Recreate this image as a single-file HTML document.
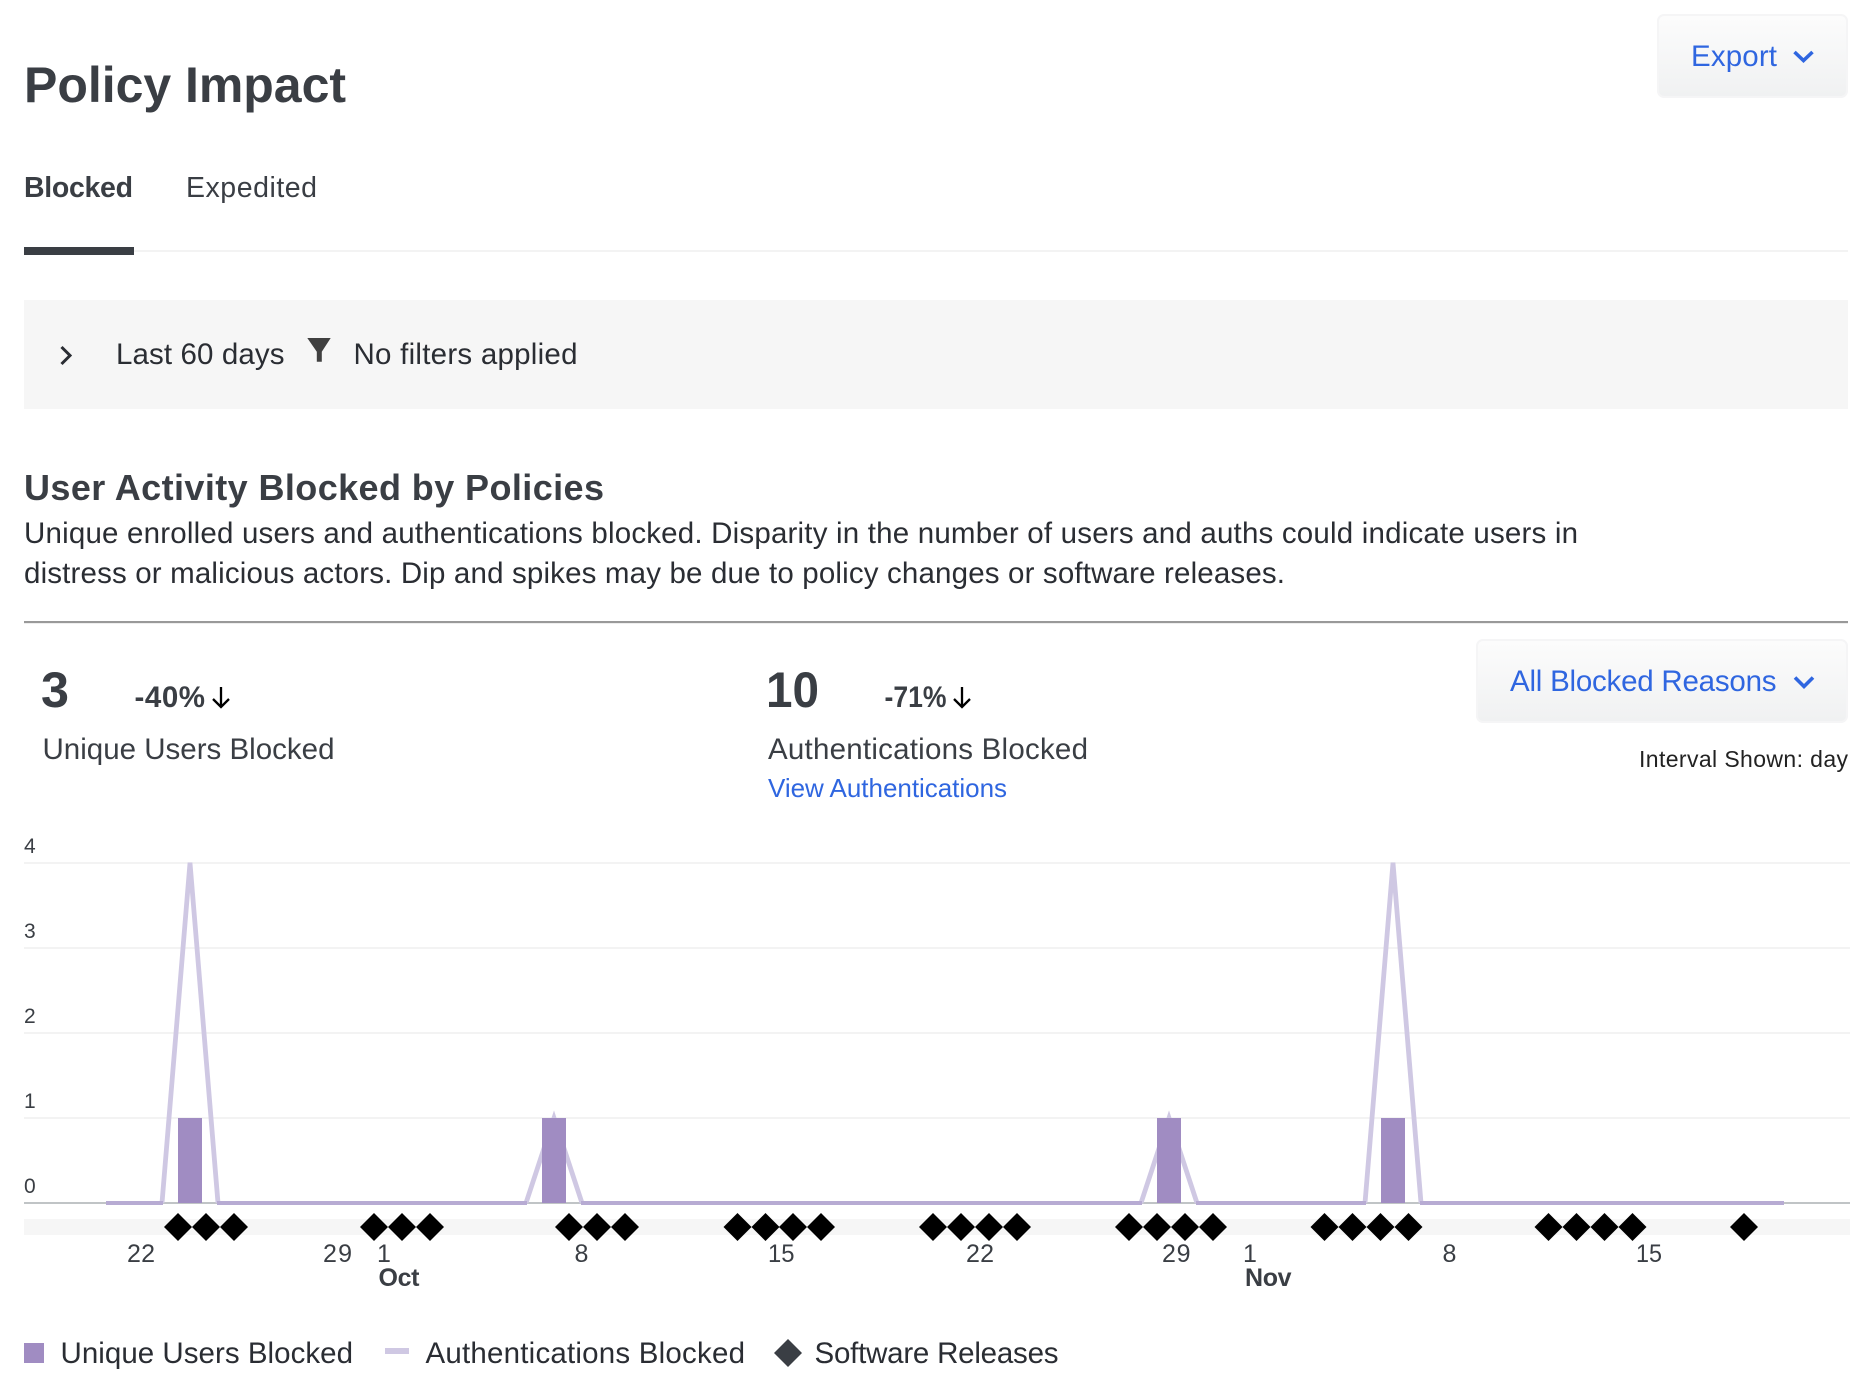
<!DOCTYPE html>
<html lang="en"><head><meta charset="utf-8"><title>Policy Impact</title>
<style>
html,body{margin:0;padding:0;background:#fff;width:1866px;height:1390px;overflow:hidden}
.box{position:absolute;box-sizing:border-box}
.btn{background:linear-gradient(#fcfcfc,#f0f1f2);border:2px solid #f5f5f6;border-radius:7px}
svg{position:absolute;left:0;top:0}
text{font-family:"Liberation Sans",sans-serif;font-size:29.500px;fill:#2a2d33}
.b{font-weight:700;fill:#3a3e44}
.blue{fill:#2f66e0}
.tk{font-size:25px;fill:#3a3e44}
.y{font-size:21px;fill:#3a3e44}
</style></head><body>
<div class="box btn" style="left:1657px;top:14px;width:191px;height:84px"></div>
<div class="box" style="left:24px;top:250px;width:1824px;height:2px;background:#f3f3f3"></div>
<div class="box" style="left:24px;top:247px;width:110px;height:8px;background:#3a3e44"></div>
<div class="box" style="left:24px;top:300px;width:1824px;height:109px;background:#f6f6f6"></div>
<div class="box" style="left:24px;top:621px;width:1824px;height:2px;background:#999"></div>
<div class="box" style="left:24px;top:623px;width:1824px;height:1px;background:#eee"></div>
<div class="box btn" style="left:1476px;top:639px;width:372px;height:84px"></div>
<svg width="1866" height="1390" viewBox="0 0 1866 1390" xmlns="http://www.w3.org/2000/svg">
<defs><clipPath id="c"><rect x="0" y="862.500" width="1866" height="350"/></clipPath></defs>
<text class="b" x="24" y="102" style="font-size:50px" textLength="322">Policy Impact</text>
<text class="b" x="24" y="197" style="font-size:28.500px" textLength="109">Blocked</text>
<text x="186" y="197" style="font-size:28.500px;fill:#3a3e44" textLength="131">Expedited</text>
<text class="blue" x="1691" y="66" textLength="86">Export</text>
<path d="M1794.500 52L1803.500 60.500L1812.500 52" fill="none" stroke="#2f66e0" stroke-width="3.600"/>
<path d="M61.500 347L70 355.500L61.500 364" fill="none" stroke="#2a2d33" stroke-width="3"/>
<text x="116" y="364" textLength="168.500">Last 60 days</text>
<polygon points="307.300,338 330.700,338 321.800,351.700 321.800,361.700 316.800,361.700 316.800,351.700" fill="#404040"/>
<text x="353.500" y="364" textLength="224">No filters applied</text>
<text class="b" x="24" y="500" style="font-size:36px" textLength="580">User Activity Blocked by Policies</text>
<text x="24" y="543" textLength="1554">Unique enrolled users and authentications blocked. Disparity in the number of users and auths could indicate users in</text>
<text x="24" y="583" textLength="1261">distress or malicious actors. Dip and spikes may be due to policy changes or software releases.</text>
<text class="b" x="41" y="707" style="font-size:50px" textLength="28" lengthAdjust="spacingAndGlyphs">3</text>
<text class="b" x="134.500" y="707" textLength="70.500">-40%</text>
<path d="M221 687V707M213 699L221 707L229 699" fill="none" stroke="#000" stroke-width="2.300"/>
<text x="42.500" y="759" style="fill:#3a3e44" textLength="292">Unique Users Blocked</text>
<text class="b" x="766" y="707" style="font-size:50px" textLength="53" lengthAdjust="spacingAndGlyphs">10</text>
<text class="b" x="884.500" y="707" textLength="62" lengthAdjust="spacingAndGlyphs">-71%</text>
<path d="M962 687V707M954 699L962 707L970 699" fill="none" stroke="#000" stroke-width="2.300"/>
<text x="768" y="759" style="fill:#3a3e44" textLength="320">Authentications Blocked</text>
<text class="blue" x="768" y="797" style="font-size:26px" textLength="239">View Authentications</text>
<text class="blue" x="1510" y="691" textLength="266.500">All Blocked Reasons</text>
<path d="M1795 677.500L1804 686.500L1813 677.500" fill="none" stroke="#2f66e0" stroke-width="3.600"/>
<text x="1639" y="767" style="font-size:23px;fill:#222" textLength="209">Interval Shown: day</text>
<g fill="#f3f3f3">
<rect x="24" y="862" width="1826" height="2"/><rect x="24" y="947" width="1826" height="2"/>
<rect x="24" y="1032" width="1826" height="2"/><rect x="24" y="1117" width="1826" height="2"/>
</g>
<rect x="24" y="1202" width="1826" height="2" fill="#c0c4c6"/>
<text class="y" x="24" y="853">4</text><text class="y" x="24" y="938">3</text>
<text class="y" x="24" y="1023">2</text><text class="y" x="24" y="1108">1</text><text class="y" x="24" y="1193">0</text>
<g clip-path="url(#c)" fill="none" stroke-miterlimit="30">
<polyline stroke="#cfc8e3" stroke-width="4.800" points="162,1203 190,863 218,1203"/>
<polyline stroke="#cfc8e3" stroke-width="4.800" points="526,1203 554,1118 582,1203"/>
<polyline stroke="#cfc8e3" stroke-width="4.800" points="1141,1203 1169,1118 1197,1203"/>
<polyline stroke="#cfc8e3" stroke-width="4.800" points="1365,1203 1393,863 1421,1203"/>
<path stroke="#b7abd3" stroke-width="4" d="M106 1203H163M217 1203H527M581 1203H1142M1196 1203H1366M1420 1203H1784"/>
</g>
<g fill="#a08cc2">
<rect x="178" y="1118" width="24" height="85"/><rect x="542" y="1118" width="24" height="85"/>
<rect x="1157" y="1118" width="24" height="85"/><rect x="1381" y="1118" width="24" height="85"/>
</g>
<rect x="24" y="1219" width="1826" height="16" fill="#f6f6f6"/>
<g fill="#000">
<path d="M178 1213l14 14-14 14-14-14zM206 1213l14 14-14 14-14-14zM234 1213l14 14-14 14-14-14z"/>
<path d="M374 1213l14 14-14 14-14-14zM402 1213l14 14-14 14-14-14zM430 1213l14 14-14 14-14-14z"/>
<path d="M569 1213l14 14-14 14-14-14zM597 1213l14 14-14 14-14-14zM625 1213l14 14-14 14-14-14z"/>
<path d="M737.500 1213l14 14-14 14-14-14zM765.500 1213l14 14-14 14-14-14zM793 1213l14 14-14 14-14-14zM821 1213l14 14-14 14-14-14z"/>
<path d="M933 1213l14 14-14 14-14-14zM961 1213l14 14-14 14-14-14zM989 1213l14 14-14 14-14-14zM1017 1213l14 14-14 14-14-14z"/>
<path d="M1129 1213l14 14-14 14-14-14zM1157 1213l14 14-14 14-14-14zM1185 1213l14 14-14 14-14-14zM1213 1213l14 14-14 14-14-14z"/>
<path d="M1324.500 1213l14 14-14 14-14-14zM1352.500 1213l14 14-14 14-14-14zM1380.500 1213l14 14-14 14-14-14zM1408.500 1213l14 14-14 14-14-14z"/>
<path d="M1548.500 1213l14 14-14 14-14-14zM1576.500 1213l14 14-14 14-14-14zM1604.500 1213l14 14-14 14-14-14zM1632.500 1213l14 14-14 14-14-14z"/>
<path d="M1744 1213l14 14-14 14-14-14z"/>
</g>
<text class="tk" x="127" y="1262" textLength="28">22</text>
<text class="tk" x="323" y="1262" textLength="29">29</text>
<text class="tk" x="377" y="1262">1</text>
<text class="b" x="378.500" y="1286" style="font-size:25px" textLength="41">Oct</text>
<text class="tk" x="574.500" y="1262">8</text>
<text class="tk" x="768" y="1262" textLength="26.500" lengthAdjust="spacingAndGlyphs">15</text>
<text class="tk" x="966" y="1262" textLength="28">22</text>
<text class="tk" x="1162" y="1262" textLength="28.500">29</text>
<text class="tk" x="1243" y="1262">1</text>
<text class="b" x="1245" y="1286" style="font-size:25px" textLength="46.500">Nov</text>
<text class="tk" x="1442.500" y="1262">8</text>
<text class="tk" x="1636" y="1262" textLength="26" lengthAdjust="spacingAndGlyphs">15</text>
<rect x="24" y="1343" width="20" height="20" fill="#a08cc2"/>
<text x="60.500" y="1363" textLength="292.500">Unique Users Blocked</text>
<rect x="385" y="1348" width="24" height="6" fill="#cfc8e3"/>
<text x="425.500" y="1363" textLength="319.500">Authentications Blocked</text>
<path d="M788 1339l14 14-14 14-14-14z" fill="#3a3e44"/>
<text x="814.500" y="1363" textLength="244">Software Releases</text>
</svg>
</body></html>
